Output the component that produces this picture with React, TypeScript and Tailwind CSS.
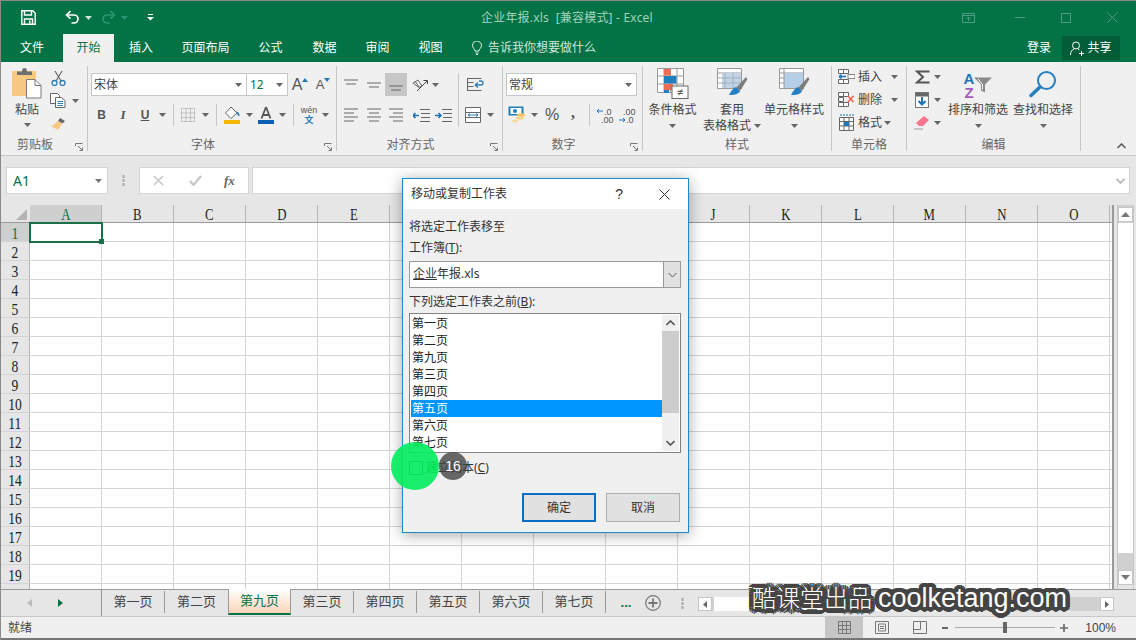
import React from "react";

const Caret = ({ c = "#666" }: { c?: string }) => (
  <svg width="7" height="4" viewBox="0 0 7 4"><path d="M0 0h7L3.5 4z" fill={c} /></svg>
);
const Launcher = () => (
  <svg width="8" height="8" viewBox="0 0 8 8" fill="none" stroke="#777"><path d="M.5 3V.5H7.5" /><path d="M3 3l4 4M7.5 4.5v3h-3" /></svg>
);
const Lines = ({ kind }: { kind: string }) => {
  const rows: Record<string, string> = {
    top: "M1 3h14M3 7h10",
    mid: "M1 6h14M3 10h10",
    bottom: "M1 9h14M3 13h10",
    left: "M1 2h14M1 6h10M1 10h14M1 14h10",
    center: "M1 2h14M3 6h10M1 10h14M3 14h10",
    right: "M1 2h14M5 6h10M1 10h14M5 14h10",
  };
  return <svg width="16" height="16" viewBox="0 0 16 16" fill="none" stroke="#666"><path d={rows[kind]} /></svg>;
};
const Sep = () => <div className="h-[22px] w-px bg-[#c6c6c6]" />;

const Save = () => (
  <svg width="15" height="15" viewBox="0 0 15 15" fill="none" stroke="#fff" strokeWidth="1.4"><path d="M.8.8h11l2.4 2.4v11H.8z" /><path d="M3.5 1v4h7V1M3.5 14V9h8v5" /><path d="M8 10.5h1.5v3H8z" fill="#fff" stroke="none" /></svg>
);
const Undo = ({ c }: { c: string }) => (
  <svg width="15" height="15" viewBox="0 0 15 15" fill="none" stroke={c} strokeWidth="1.7"><path d="M5.5 1.2 1.6 5l3.9 3.7" /><path d="M2 5h7a4 4 0 0 1 0 8H6.5" /></svg>
);
const Paste = () => (
  <svg width="30" height="32" viewBox="0 0 30 32">
    <rect x="0" y="4" width="24" height="25" rx="1" fill="#f8c981" />
    <path d="M5 8V4.500h5C10 2 11 1 12.500 1S15 2 15 4.500h5V8z" fill="#6f6f6f" />
    <path d="M14.500 12.500H23l6 6V31H14.500z" fill="#fff" stroke="#7a7a7a" />
    <path d="M23 13v5.500h6" fill="none" stroke="#7a7a7a" />
  </svg>
);
const Scissors = () => (
  <svg width="15" height="16" viewBox="0 0 15 16" fill="none"><path d="M4 1l6 10M11 1 5 11" stroke="#666" strokeWidth="1.200" /><circle cx="3.500" cy="13" r="2.500" stroke="#2e7fb8" strokeWidth="1.300" /><circle cx="11.500" cy="13" r="2.500" stroke="#2e7fb8" strokeWidth="1.300" /></svg>
);
const Copy = () => (
  <svg width="16" height="15" viewBox="0 0 16 15" fill="#fff" stroke="#666"><path d="M.5.500h7l2 2v8H.5z" /><path d="M5.500 4.500h6l3.500 3v7H5.500z" /><path d="M7.500 8.500h5.500M7.500 10.500h5.500M7.500 12.500h5.500" stroke="#2e7fb8" /></svg>
);
const Brush = () => (
  <svg width="16" height="14" viewBox="0 0 16 14"><path d="M10 1l5 3-2.500 2.500L8 4z" fill="#666" /><path d="M7.500 4 12 7 8 13 1 9 3.500 8z" fill="#f7c784" /></svg>
);
const BorderIcon = () => (
  <svg width="14" height="14" viewBox="0 0 14 14" fill="none" stroke="#999" strokeDasharray="1 1"><path d="M.5.500h13v13H.5zM.5 5h13M.5 9.500h13M5 .500v13M9.500.500v13" /></svg>
);
const Fill = () => (
  <svg width="17" height="19" viewBox="0 0 17 19"><path d="M7 1 1.500 7 7 12.500 13 7z" fill="#fff" stroke="#666" /><path d="M12 5l3 2 .5 3-1.500 0z" fill="#2e7fb8" /><rect x="0" y="14" width="16" height="4" fill="#f5b800" /></svg>
);
const FontColor = () => (
  <svg width="16" height="19" viewBox="0 0 16 19"><path d="M8 1 3.500 12.500M8 1l4.500 11.500M5 9h6" fill="none" stroke="#555" strokeWidth="1.800" /><rect x="0" y="14" width="16" height="4" fill="#0a5fb4" /></svg>
);
const Orient = () => (
  <svg width="18" height="16" viewBox="0 0 18 16" fill="none" stroke="#666"><path d="M2 6l5-3 4 6-3 1.500zM4 4l4 6" /><path d="M6 14 16 4M12.500 3.500H16.500V7" stroke="#444" /></svg>
);
const Wrap = () => (
  <svg width="17" height="16" viewBox="0 0 17 16" fill="none" stroke="#666"><path d="M.5 1.500h14M.5 5.500h6M.5 9.500h6M.5 13.500h14M.500 1v13" /><path d="M8 8h6a2 2 0 0 0 0-4h-2M8 8l3-2.500M8 8l3 2.500" stroke="#2e7fb8" strokeWidth="1.300" /></svg>
);
const Merge = () => (
  <svg width="16" height="16" viewBox="0 0 16 16" fill="#fff" stroke="#666"><path d="M.5.500h15v15H.5zM.5 5.500h15M.5 10.500h15" /><path d="M3 8h10M3 8l2-1.500M3 8l2 1.500M13 8l-2-1.500M13 8l-2 1.500" fill="none" stroke="#2e7fb8" /></svg>
);
const Indent = ({ inc }: { inc?: boolean }) => (
  <svg width="17" height="13" viewBox="0 0 17 13" fill="none" stroke="#666"><path d="M7 .500h10M8 4.500h9M8 8.500h9M7 12.500h10" /><path d={inc ? "M0 6.500h6M3.500 4l2.500 2.500L3.500 9" : "M6 6.500H0M2.500 4 0 6.500 2.500 9"} stroke="#1b75bb" strokeWidth="1.600" /></svg>
);
const Accounting = () => (
  <svg width="18" height="18" viewBox="0 0 18 18"><rect x=".5" y=".5" width="15" height="9" fill="#1f7eb8" /><rect x="2.500" y="2" width="11" height="6" fill="#fff" /><circle cx="7" cy="5" r="2" fill="#1f7eb8" /><ellipse cx="13" cy="9" rx="4" ry="1.700" fill="#f5c35a" /><ellipse cx="12" cy="12" rx="4" ry="1.700" fill="#f5d488" /><ellipse cx="7" cy="15" rx="3" ry="1.500" fill="#f7dca0" /></svg>
);
const CondFmt = () => (
  <svg width="32" height="31" viewBox="0 0 32 31">
    <path d="M.5.500h26v24H.500zM.5 8h26M.5 16h26M7 .5v24M13.500.500v24M20 .5v24" fill="#fff" stroke="#999" />
    <rect x="7" y="1" width="6.500" height="6.500" fill="#ef6c50" />
    <rect x="7" y="8" width="12.500" height="7.500" fill="#1e7fbf" />
    <rect x="7" y="16" width="9" height="6" fill="#ef6c50" />
    <rect x="7" y="22" width="5" height="3" fill="#1e7fbf" />
    <rect x="15" y="18" width="16" height="12.500" fill="#fff" stroke="#666" />
    <text x="23" y="28" fontSize="11" textAnchor="middle" fill="#444" className="[font-family:'Liberation_Sans',sans-serif]">≠</text>
  </svg>
);
const TableFmt = ({ small }: { small?: boolean }) => (
  <svg width="31" height="31" viewBox="0 0 31 31">
    <path d="M.5.500h24v20H.500z" fill="#fff" stroke="#999" />
    <path d="M.5 5h24" stroke="#999" />
    <rect x="5" y="5" width="19" height="15" fill={small ? "#b7cfe6" : "#c4d4e4"} />
    {!small && <path d="M8 5v16M16 5v16M1 10h23M1 15h23" stroke="#9fb2c4" fill="none" />}
    {small && <path d="M5 1v19M1 10h4M1 15h4" stroke="#999" fill="none" />}
    <path d="M19 20 29 9l1.500 2L23 23z" fill="#7d7d7d" />
    <path d="M19 19c-3 1-5 4-7 8 4 0 9-.5 11-3.500z" fill="#2380c2" />
  </svg>
);
const InsertCell = () => (
  <svg width="17" height="15" viewBox="0 0 17 15" fill="#fff" stroke="#666"><path d="M.5.500h5v4h-5zM5.500.500h5v4h-5zM.5 10.500h5v4h-5zM5.500 10.500h5v4h-5z" /><path d="M10 5.500h7v4h-7z" stroke="#888" /><path d="M1 7.500h7M1 7.500l2.500-2M1 7.500l2.500 2" fill="none" stroke="#1b75bb" strokeWidth="1.500" /></svg>
);
const DeleteCell = () => (
  <svg width="17" height="16" viewBox="0 0 17 16" fill="#fff" stroke="#666"><path d="M.5.500h5v4h-5zM5.500.500h5v4h-5zM.5 10.500h5v4h-5zM5.500 10.500h5v4h-5zM.500 5.500h5v4h-5z" /><path d="M10 4l5.500 6M15.500 4 10 10" fill="none" stroke="#e8604a" strokeWidth="1.500" /></svg>
);
const FormatCell = () => (
  <svg width="16" height="17" viewBox="0 0 16 17" fill="#fff" stroke="#666"><path d="M1 1h14" stroke="#1b75bb" strokeDasharray="2 1" /><path d="M.5 3.500h14v13H.5zM.5 7.500h14M.5 12h14M5 3.500v13M10 3.500v13" /><rect x="5" y="8" width="5" height="4" fill="#1b75bb" stroke="none" /></svg>
);
const Sigma = () => (
  <svg width="15" height="14" viewBox="0 0 15 14" fill="none" stroke="#555" strokeWidth="2"><path d="M14.500 1.500H2L8 7l-6 5.500h12.500" /></svg>
);
const FillDown = () => (
  <svg width="14" height="16" viewBox="0 0 14 16"><rect x=".5" y=".5" width="13" height="15" fill="#fff" stroke="#777" /><rect x="1" y="1" width="12" height="3.500" fill="#666" /><path d="M7 5v7M3.500 9 7 12.500 10.500 9" fill="none" stroke="#1b75bb" strokeWidth="2" /></svg>
);
const Eraser = () => (
  <svg width="16" height="14" viewBox="0 0 16 14"><path d="M10 0l5 4-6 6H5L2 7z" fill="#f7768e" /><path d="M0 13h9" stroke="#aaa" strokeWidth="1.200" /></svg>
);
const SortIcon = () => (
  <svg width="32" height="34" viewBox="0 0 32 34">
    <path d="M12 10.500h18l-7 7v8l-4-2v-6z" fill="#8a8a8a" />
    <path d="M16 12 20.500 17.500v5" fill="none" stroke="#fff" />
    <text x="7" y="16.500" fontSize="15" fontWeight="700" textAnchor="middle" fill="#1b75bb" className="[font-family:'Liberation_Sans',sans-serif]">A</text>
    <text x="7" y="30.500" fontSize="15" fontWeight="700" textAnchor="middle" fill="#a05cb8" className="[font-family:'Liberation_Sans',sans-serif]">Z</text>
  </svg>
);
const Magnifier = () => (
  <svg width="28" height="28" viewBox="0 0 28 28" fill="none" stroke="#2680c2"><circle cx="17.500" cy="10.500" r="8.500" strokeWidth="2" /><path d="M11 17 2 25.500" strokeWidth="3.500" strokeLinecap="round" /></svg>
);
const SmallBtn = ({ children, w }: { children: React.ReactNode; w: string }) => (
  <div className={`flex h-full items-center justify-center ${w}`}>{children}</div>
);

const GroupLabel = ({ text, launcher }: { text: string; launcher?: boolean }) => (
  <div className={`relative mt-auto -mb-[2px] flex h-[16px] items-center justify-center text-[12px] leading-none text-[#666] ${launcher ? "pr-[18px]" : ""}`}>
    {text}
    {launcher && <span className="absolute right-[4px] bottom-[2px] flex"><Launcher /></span>}
  </div>
);

const LargeBtn = ({ icon, lines, w }: { icon: React.ReactNode; lines: string[]; w: string }) => (
  <div className={`flex flex-col items-center ${w}`}>
    <div className="flex h-[35px] items-center">{icon}</div>
    <div className="mt-[1px] text-[12px] leading-[16px] whitespace-nowrap">{lines[0]}</div>
    {lines[1] ? (
      <div className="flex items-center gap-[3px] text-[12px] leading-[15px] whitespace-nowrap">{lines[1]}<Caret /></div>
    ) : (
      <div className="flex h-[15px] items-center"><Caret /></div>
    )}
  </div>
);

const Tab = ({ t, w, active }: { t: string; w: string; active?: boolean }) => (
  <div className={`flex items-center justify-center ${w} ${active ? "bg-[#f0f0f0] text-[#037345]" : "text-white"}`}>{t}</div>
);

const cols = "ABCDEFGHIJKLMNO".split("");
const rows = Array.from({ length: 20 }, (_, i) => i + 1);
const sheets = ["第一页", "第二页", "第九页", "第三页", "第四页", "第五页", "第六页", "第七页"];
const listItems = ["第一页", "第二页", "第九页", "第三页", "第四页", "第五页", "第六页", "第七页"];

export default function App() {
  return (
    <div className="relative flex h-[640px] w-[1136px] flex-col overflow-hidden border-t border-l border-[#8a8a8a] bg-[#e6e6e6] text-[12px] text-[#444] [font-family:'Noto_Sans','Noto_Sans_CJK_SC',sans-serif]">
      {/* title bar */}
      <div className="flex h-[33px] shrink-0 items-center bg-[#037345]">
        <SmallBtn w="ml-[14px] w-[26px]"><Save /></SmallBtn>
        <SmallBtn w="ml-[22px] w-[18px]"><Undo c="#fff" /></SmallBtn>
        <SmallBtn w="w-[14px]"><Caret c="#cfe6da" /></SmallBtn>
        <SmallBtn w="ml-[4px] w-[18px]"><span className="-scale-x-100"><Undo c="#2b9670" /></span></SmallBtn>
        <SmallBtn w="w-[14px]"><Caret c="#2b9670" /></SmallBtn>
        <SmallBtn w="ml-[12px] w-[14px]">
          <svg width="7" height="7" viewBox="0 0 7 7"><path d="M1 .5h5" stroke="#fff" /><path d="M0 3h7L3.500 6.500z" fill="#fff" /></svg>
        </SmallBtn>
        <div className="ml-[324px] w-[200px] text-[12px] tracking-[0.2px] whitespace-pre text-[#a2d2bc]">企业年报.xls  [兼容模式] - Excel</div>
        <div className="ml-auto flex h-full items-center">
          <svg width="13" height="10" viewBox="0 0 13 10" fill="none" stroke="#4d9e82"><path d="M.5.500h12v9H.5zM.5 2.500h12M6.500 8V4M4.500 6l2-2 2 2" /></svg>
          <svg className="ml-[40px]" width="10" height="1"><path d="M0 .5h10" stroke="#4d9e82" /></svg>
          <svg className="ml-[36px]" width="10" height="10"><path d="M.5.500h9v9h-9z" fill="none" stroke="#4d9e82" /></svg>
          <svg className="mr-[18px] ml-[36px]" width="11" height="11"><path d="M.5.500l10 10M10.500.500l-10 10" fill="none" stroke="#4d9e82" /></svg>
        </div>
      </div>
      {/* tabs */}
      <div className="flex h-[28px] shrink-0 items-stretch bg-[#037345] text-[12px]">
        <Tab t="文件" w="w-[62px]" />
        <Tab t="开始" w="w-[51px]" active />
        <Tab t="插入" w="w-[54px]" />
        <Tab t="页面布局" w="w-[75px]" />
        <Tab t="公式" w="w-[55px]" />
        <Tab t="数据" w="w-[53px]" />
        <Tab t="审阅" w="w-[53px]" />
        <Tab t="视图" w="w-[53px]" />
        <div className="ml-[15px] flex items-center gap-[6px] text-[#cfe6da]">
          <svg width="10" height="14" viewBox="0 0 10 14" fill="none" stroke="#e6f2ec"><path d="M3 10c0-2-2.500-3-2.500-5.500a4.500 4.500 0 0 1 9 0C9.500 7 7 8 7 10zM3.500 12h3M4 13.500h2" /></svg>
          告诉我你想要做什么
        </div>
        <div className="ml-auto flex items-center">
          <span className="text-white">登录</span>
          <div className="mr-[16px] ml-[11px] flex h-[24px] w-[58px] items-center justify-center gap-[3px] bg-[#025c37] text-white">
            <svg width="14" height="15" viewBox="0 0 14 15" fill="none" stroke="#fff"><circle cx="6" cy="4.500" r="3.500" /><path d="M.5 14c0-3.500 1.500-5 3.500-6M8 8l1.500 1M9 12.500h5M11.500 10v5" /></svg>
            共享
          </div>
        </div>
      </div>
      {/* ribbon */}
      <div className="flex h-[94px] shrink-0 items-stretch border-b border-[#c6c6c6] bg-[#f0f0f0] text-[#444]">
        {/* clipboard */}
        <div className="my-[4px] flex w-[87px] flex-col border-r border-[#c6c6c6]">
          <div className="flex">
            <div className="ml-[11px] flex w-[30px] flex-col items-center">
              <div className="flex h-[33px] items-end"><Paste /></div>
              <div className="mt-[3px] text-[12px] leading-[16px] whitespace-nowrap">粘贴</div>
              <div className="mt-[3px] flex h-[8px] items-center"><Caret /></div>
            </div>
            <div className="ml-[8px] flex flex-col">
              <div className="flex h-[23px] w-[16px] items-center justify-center"><Scissors /></div>
              <div className="flex h-[23px] items-center"><div className="flex w-[16px] justify-center"><Copy /></div><span className="ml-[6px]"><Caret /></span></div>
              <div className="flex h-[23px] w-[16px] items-center justify-center"><Brush /></div>
            </div>
          </div>
          <GroupLabel text="剪贴板" launcher />
        </div>
        {/* font */}
        <div className="my-[4px] flex w-[249px] flex-col border-r border-[#c6c6c6]">
          <div className="mt-[7px] ml-[3px] flex h-[23px] items-stretch">
            <div className="flex w-[156px] items-center justify-between border border-[#c6c6c6] bg-white pr-[4px] pl-[2px] text-[12px]">宋体<Caret /></div>
            <div className="flex w-[41px] items-center justify-between border border-l-0 border-[#c6c6c6] bg-white pr-[4px] pl-[3px] text-[12px] text-[#037345]">12<Caret /></div>
            <div className="ml-[2px] flex w-[20px] items-center justify-center">
              <span className="text-[16px] text-[#555] [font-family:'Liberation_Sans',sans-serif]">A</span>
              <svg className="-mt-[10px]" width="6" height="4"><path d="M0 4h6L3 0z" fill="#1f7eb8" /></svg>
            </div>
            <div className="ml-[2px] flex w-[22px] items-center justify-center">
              <span className="text-[13px] text-[#555] [font-family:'Liberation_Sans',sans-serif]">A</span>
              <svg className="-mt-[10px]" width="6" height="4"><path d="M0 0h6L3 4z" fill="#1f7eb8" /></svg>
            </div>
          </div>
          <div className="mt-[8px] ml-[3px] flex h-[22px] items-center">
            <SmallBtn w="w-[21px]"><span className="text-[12px] font-bold text-[#555] [font-family:'Liberation_Sans',sans-serif]">B</span></SmallBtn>
            <SmallBtn w="w-[22px]"><span className="text-[13px] font-bold text-[#555] italic [font-family:'Liberation_Serif',serif]">I</span></SmallBtn>
            <SmallBtn w="w-[22px]"><span className="text-[12px] font-bold text-[#555] underline [font-family:'Liberation_Sans',sans-serif]">U</span></SmallBtn>
            <SmallBtn w="w-[12px]"><Caret /></SmallBtn>
            <SmallBtn w="w-[10px]"><Sep /></SmallBtn>
            <SmallBtn w="w-[20px]"><BorderIcon /></SmallBtn>
            <SmallBtn w="w-[14px]"><Caret /></SmallBtn>
            <SmallBtn w="w-[8px]"><Sep /></SmallBtn>
            <SmallBtn w="w-[24px]"><Fill /></SmallBtn>
            <SmallBtn w="w-[10px]"><Caret /></SmallBtn>
            <SmallBtn w="w-[24px]"><FontColor /></SmallBtn>
            <SmallBtn w="w-[8px]"><Caret /></SmallBtn>
            <SmallBtn w="w-[14px]"><Sep /></SmallBtn>
            <div className="flex w-[18px] flex-col items-center text-[9px] leading-[10px] whitespace-nowrap text-[#555]">
              <span className="[font-family:'Liberation_Sans',sans-serif]">wén</span>
              <span className="font-bold text-[#1f7eb8]">文</span>
            </div>
            <SmallBtn w="w-[14px]"><Caret /></SmallBtn>
          </div>
          <GroupLabel text="字体" launcher />
        </div>
        {/* align */}
        <div className="my-[4px] flex w-[166px] flex-col border-r border-[#c6c6c6]">
          <div className="mt-[7px] ml-[3px] flex h-[23px] items-center">
            <SmallBtn w="w-[22px]"><Lines kind="top" /></SmallBtn>
            <SmallBtn w="ml-[1px] w-[22px]"><Lines kind="mid" /></SmallBtn>
            <SmallBtn w="w-[22px] bg-[#c6c6c6]"><Lines kind="bottom" /></SmallBtn>
            <SmallBtn w="ml-[2px] w-[22px]"><Orient /></SmallBtn>
            <SmallBtn w="w-[8px]"><Caret /></SmallBtn>
            <SmallBtn w="ml-[15px] w-[9px]"><div className="h-[54px] w-px self-start bg-[#c6c6c6]" /></SmallBtn>
            <SmallBtn w="w-[24px]"><Wrap /></SmallBtn>
          </div>
          <div className="mt-[8px] ml-[3px] flex h-[22px] items-center">
            <SmallBtn w="w-[22px]"><Lines kind="left" /></SmallBtn>
            <SmallBtn w="ml-[1px] w-[22px]"><Lines kind="center" /></SmallBtn>
            <SmallBtn w="w-[22px]"><Lines kind="right" /></SmallBtn>
            <SmallBtn w="ml-[3px] w-[22px]"><Indent /></SmallBtn>
            <SmallBtn w="w-[22px]"><Indent inc /></SmallBtn>
            <SmallBtn w="ml-[8px] w-[22px]"><Merge /></SmallBtn>
            <SmallBtn w="w-[12px]"><Caret /></SmallBtn>
          </div>
          <GroupLabel text="对齐方式" launcher />
        </div>
        {/* number */}
        <div className="my-[4px] flex w-[140px] flex-col border-r border-[#c6c6c6]">
          <div className="mt-[7px] ml-[3px] flex h-[23px] w-[131px] items-center justify-between border border-[#c6c6c6] bg-white pr-[4px] pl-[2px]">常规<Caret /></div>
          <div className="mt-[8px] ml-[4px] flex h-[22px] items-center">
            <SmallBtn w="w-[20px]"><Accounting /></SmallBtn>
            <SmallBtn w="w-[14px]"><Caret /></SmallBtn>
            <SmallBtn w="w-[22px]"><span className="text-[16px] text-[#555] [font-family:'Liberation_Sans',sans-serif]">%</span></SmallBtn>
            <SmallBtn w="w-[20px]"><span className="-mt-[4px] text-[16px] font-bold text-[#555] [font-family:'Liberation_Serif',serif]">,</span></SmallBtn>
            <SmallBtn w="w-[12px]"><Sep /></SmallBtn>
            <SmallBtn w="w-[20px]">
              <svg width="18" height="17" viewBox="0 0 18 17" fill="none"><path d="M7 4H1M3 2 1 4l2 2" stroke="#1b75bb" /><text x="8" y="8" fontSize="9" fill="#555" className="[font-family:'Liberation_Sans',sans-serif]">.0</text><text x="5" y="16" fontSize="9" fill="#555" className="[font-family:'Liberation_Sans',sans-serif]">.00</text></svg>
            </SmallBtn>
            <SmallBtn w="ml-[2px] w-[20px]">
              <svg width="18" height="17" viewBox="0 0 18 17" fill="none"><path d="M1 13h6M5 11l2 2-2 2" stroke="#1b75bb" /><text x="5" y="8" fontSize="9" fill="#555" className="[font-family:'Liberation_Sans',sans-serif]">.00</text><text x="8" y="16" fontSize="9" fill="#555" className="[font-family:'Liberation_Sans',sans-serif]">.0</text></svg>
            </SmallBtn>
          </div>
          <GroupLabel text="数字" launcher />
        </div>
        {/* styles */}
        <div className="my-[4px] flex w-[189px] flex-col border-r border-[#c6c6c6]">
          <div className="flex">
            <LargeBtn w="w-[59px]" icon={<CondFmt />} lines={["条件格式"]} />
            <LargeBtn w="w-[60px]" icon={<TableFmt />} lines={["套用", "表格格式"]} />
            <div className="w-[2px]" />
            <LargeBtn w="w-[60px]" icon={<TableFmt small />} lines={["单元格样式"]} />
          </div>
          <GroupLabel text="样式" />
        </div>
        {/* cells */}
        <div className="my-[4px] flex w-[75px] flex-col border-r border-[#c6c6c6]">
          <div className="-mt-px ml-[6px] flex flex-col">
            {[
              { i: <InsertCell />, t: "插入", m: "ml-[9px]" },
              { i: <DeleteCell />, t: "删除", m: "ml-[9px]" },
              { i: <FormatCell />, t: "格式", m: "ml-[2px]" },
            ].map((r) => (
              <div key={r.t} className="flex h-[23px] items-center">
                <div className="flex w-[17px] justify-center">{r.i}</div>
                <span className="ml-[3px] whitespace-nowrap">{r.t}</span>
                <span className={`flex ${r.m}`}><Caret /></span>
              </div>
            ))}
          </div>
          <GroupLabel text="单元格" />
        </div>
        {/* edit */}
        <div className="my-[4px] flex w-[174px] flex-col border-r border-[#c6c6c6]">
          <div className="flex">
            <div className="-mt-px ml-[7px] flex w-[34px] flex-col">
              <div className="flex h-[23px] items-center"><div className="flex w-[16px] justify-center"><Sigma /></div><span className="ml-[4px]"><Caret /></span></div>
              <div className="flex h-[23px] items-center"><div className="flex w-[16px] justify-center"><FillDown /></div><span className="ml-[4px]"><Caret /></span></div>
              <div className="flex h-[23px] items-center"><div className="flex w-[16px] justify-center"><Eraser /></div><span className="ml-[4px]"><Caret /></span></div>
            </div>
            <LargeBtn w="w-[60px]" icon={<SortIcon />} lines={["排序和筛选"]} />
            <div className="w-[5px]" />
            <LargeBtn w="w-[60px]" icon={<Magnifier />} lines={["查找和选择"]} />
          </div>
          <GroupLabel text="编辑" />
        </div>
        <div className="flex flex-1 items-end justify-end pr-[10px] pb-[6px]">
          <svg width="9" height="6" viewBox="0 0 9 6" fill="none" stroke="#555" strokeWidth="1.500"><path d="M.5 5 4.500 1l4 4" /></svg>
        </div>
      </div>
      {/* formula bar */}
      <div className="flex h-[49px] shrink-0 items-start bg-[#e6e6e6] pt-[11px]">
        <div className="ml-[5px] flex h-[27px] w-[102px] items-center justify-between border border-[#d4d4d4] bg-white pr-[5px] pl-[6px] text-[14px] text-[#037345]">
          A1<Caret c="#777" />
        </div>
        <div className="flex h-[27px] w-[31px] items-center justify-center">
          <svg width="3" height="11"><path d="M1.500 0v3M1.500 4v3M1.500 8v3" stroke="#aaa" strokeWidth="2" /></svg>
        </div>
        <div className="flex h-[27px] w-[110px] items-center border border-[#d4d4d4] bg-white">
          <svg className="ml-[13px]" width="11" height="11" fill="none" stroke="#c6c6c6" strokeWidth="1.500"><path d="M1 1l9 9M10 1l-9 9" /></svg>
          <svg className="ml-[25px]" width="13" height="11" fill="none" stroke="#c6c6c6" strokeWidth="2.200"><path d="M1 6l3.500 4L12 1" /></svg>
          <span className="ml-[22px] text-[13px] font-bold text-[#666] italic [font-family:'Liberation_Serif',serif]">fx</span>
        </div>
        <div className="ml-[3px] flex h-[27px] w-[878px] items-center justify-end border border-[#d4d4d4] bg-white pr-[4px]">
          <svg width="9" height="6" fill="none" stroke="#bbb" strokeWidth="1.800"><path d="M.5 1l4 4 4-4" /></svg>
        </div>
      </div>
      {/* grid */}
      <div className="flex h-[384px] shrink-0">
        <div className="relative h-full w-[1113px] overflow-hidden border-r-2 border-[#9a9a9a] bg-white [font-family:'Liberation_Serif',serif]">
          <div className="flex h-[18px] border-b border-[#9a9a9a] bg-[#e6e6e6]">
            <div className="flex w-[29px] items-end justify-end pr-[3px] pb-[2px]">
              <svg width="11" height="11"><path d="M11 0v11H0z" fill="#b4b4b4" /></svg>
            </div>
            {cols.map((c) => (
              <div key={c} className={`flex w-[72px] items-center justify-center border-r border-[#b4b4b4] pt-[3px] leading-none ${c === "A" ? "bg-[#cfcfcf] text-[#037345]" : "text-[#222]"}`}>
                <span className="scale-x-[0.8] text-[16px]">{c}</span>
              </div>
            ))}
          </div>
          {rows.map((r) => (
            <div key={r} className="flex h-[19px] border-b border-[#d4d4d4]">
              <div className={`flex w-[29px] items-center justify-center border-r border-[#b4b4b4] pt-[3px] leading-none ${r === 1 ? "bg-[#cfcfcf] text-[#037345]" : "bg-[#e6e6e6] text-[#222]"}`}>
                <span className="scale-x-[0.85] text-[16px]">{r === 20 ? "" : r}</span>
              </div>
              {cols.map((c) => (
                <div key={c} className="w-[72px] border-r border-[#d4d4d4]" />
              ))}
            </div>
          ))}
          <div className="absolute top-[17px] left-[28px] h-[21px] w-[74px] border-2 border-[#1a6e48]">
            <div className="absolute -right-[3px] -bottom-[3px] h-[5px] w-[5px] bg-[#1a6e48]" />
          </div>
        </div>
        <div className="ml-[3px] flex w-[17px] flex-col border-x border-[#c6c6c6] bg-[#d0d0d0]">
          <div className="mt-[2px] flex h-[15px] items-center justify-center border border-[#c6c6c6] bg-white">
            <svg width="9" height="5"><path d="M0 5h9L4.500 0z" fill="#777" /></svg>
          </div>
          <div className="mt-px h-[330px] bg-white" />
          <div className="mt-auto flex h-[15px] items-center justify-center border border-[#c6c6c6] bg-white">
            <svg width="9" height="5"><path d="M0 0h9L4.500 5z" fill="#777" /></svg>
          </div>
          <div className="h-[4px] bg-[#e6e6e6]" />
        </div>
      </div>
      {/* sheet tabs */}
      <div className="flex h-[28px] shrink-0 items-start border-t border-b border-t-[#9a9a9a] border-b-[#c6c6c6] bg-[#e6e6e6] text-[13px]">
        <div className="flex h-[26px] w-[101px] items-center border-r border-[#9a9a9a]">
          <svg className="ml-[26px]" width="5" height="8"><path d="M5 0v8L0 4z" fill="#bbb" /></svg>
          <svg className="ml-[26px]" width="5" height="8"><path d="M0 0v8l5-4z" fill="#037345" /></svg>
        </div>
        {sheets.map((s, i) =>
          i === 2 ? (
            <div key={s} className="-mt-px flex h-[26px] w-[63px] items-center justify-center border-x border-b-2 border-x-[#9a9a9a] border-b-[#037345] bg-gradient-to-b from-white to-[#fbd4b8] text-[#037345]">{s}</div>
          ) : (
            <div key={s} className={`mt-[1px] flex h-[22px] w-[63px] items-center justify-center ${i === 1 ? "" : "border-r border-[#9a9a9a]"}`}>{s}</div>
          )
        )}
        <div className="ml-[13px] flex h-[26px] w-[14px] items-center justify-center text-[13px] font-bold text-[#037345]">...</div>
        <div className="ml-[12px] flex h-[26px] items-center">
          <svg width="16" height="16" viewBox="0 0 16 16" fill="none" stroke="#777" strokeWidth="1.200"><circle cx="8" cy="8" r="7.300" /><path d="M8 3.500v9M3.500 8h9" strokeWidth="1.800" /></svg>
        </div>
        <div className="ml-[20px] flex h-[26px] items-center">
          <svg width="3" height="11"><path d="M1.500 0v3M1.500 4v3M1.500 8v3" stroke="#aaa" strokeWidth="2" /></svg>
        </div>
        <div className="mt-[7px] ml-[14px] flex h-[14px] w-[416px] bg-[#d0d0d0]">
          <div className="flex w-[14px] items-center justify-center border border-[#c6c6c6] bg-white">
            <svg width="4" height="7"><path d="M4 0v7L0 3.500z" fill="#666" /></svg>
          </div>
          <div className="ml-[2px] w-[260px] bg-white" />
          <div className="ml-auto flex w-[14px] items-center justify-center border border-[#c6c6c6] bg-white">
            <svg width="4" height="7"><path d="M0 0v7l4-3.500z" fill="#666" /></svg>
          </div>
        </div>
      </div>
      {/* status */}
      <div className="flex h-[21px] shrink-0 items-stretch bg-[#f0f0f0] text-[12px]">
        <div className="ml-[7px] flex items-center">就绪</div>
        <div className="ml-auto flex items-stretch">
          <div className="flex w-[38px] items-center justify-center bg-[#c6c6c6]">
            <svg width="13" height="13" fill="none" stroke="#777"><path d="M.5.500h12v12H.5zM4.500.500v12M8.500.500v12M.5 4.500h12M.5 8.500h12" /></svg>
          </div>
          <div className="flex w-[38px] items-center justify-center">
            <svg width="14" height="13" fill="none" stroke="#777"><path d="M.5.500h13v12H.5zM3.500 3v7h7V3zM5 5.500h4M5 7.500h4" /></svg>
          </div>
          <div className="flex w-[38px] items-center justify-center">
            <svg width="14" height="13" fill="none" stroke="#777"><path d="M.5.500h13v12H.5zM.5 8.500h7V.5" /></svg>
          </div>
          <div className="ml-[3px] flex items-center">
            <svg width="6" height="2"><path d="M0 1h6" stroke="#666" strokeWidth="2" /></svg>
            <div className="relative ml-[7px] h-px w-[100px] bg-[#aaa]">
              <div className="absolute -top-[5px] left-[48px] h-[11px] w-[4px] bg-[#666]" />
            </div>
            <svg className="ml-[5px]" width="8" height="8"><path d="M0 4h8M4 0v8" stroke="#666" strokeWidth="1.600" /></svg>
          </div>
          <div className="mr-[20px] ml-[17px] flex items-center text-[12px] [font-family:'Liberation_Sans',sans-serif]">100%</div>
        </div>
      </div>
      <div className="h-[2px] shrink-0 bg-[#777]" />

      {/* dialog */}
      <div className="absolute top-[177px] left-[401px] flex h-[355px] w-[287px] flex-col border border-[#1d8ac7] bg-[#f0f0f0] text-[12px] text-[#333] shadow-[0_2px_14px_rgba(0,0,0,0.35)]">
        <div className="flex h-[30px] shrink-0 items-center bg-white pl-[8px]">
          移动或复制工作表
          <span className="ml-auto text-[14px] [font-family:'Liberation_Sans',sans-serif]">?</span>
          <svg className="mr-[18px] ml-[36px]" width="11" height="11" fill="none" stroke="#333"><path d="M.5.500l10 10M10.500.500l-10 10" /></svg>
        </div>
        <div className="mt-[9px] ml-[6px] leading-[18px]">将选定工作表移至</div>
        <div className="mt-[3px] ml-[6px] leading-[18px]">工作簿(<u>T</u>):</div>
        <div className="mt-[4px] ml-[6px] flex h-[27px] w-[272px] items-center justify-between border border-[#999] bg-white pl-[3px] text-[12px]">
          <span className="-mt-[1px]"><u>企业</u>年报.xls</span>
          <div className="flex h-full w-[17px] items-center justify-center border-l border-[#999] bg-[#e1e1e1]">
            <svg width="9" height="6" fill="none" stroke="#555"><path d="M.5 1l4 4 4-4" /></svg>
          </div>
        </div>
        <div className="mt-[5px] ml-[6px] leading-[18px]">下列选定工作表之前(<u>B</u>):</div>
        <div className="mt-[2px] ml-[6px] flex h-[140px] w-[272px] border border-[#828282] bg-white p-px">
          <div className="flex-1">
            {listItems.map((s, i) => (
              <div key={i} className={`flex h-[17px] items-center pl-[1px] ${i === 5 ? "bg-[#0096ff] text-white" : "text-[#222]"}`}>{s}</div>
            ))}
          </div>
          <div className="flex w-[17px] flex-col items-center bg-[#f0f0f0]">
            <div className="flex h-[16px] items-center"><svg width="9" height="6" fill="none" stroke="#555" strokeWidth="1.600"><path d="M.5 5l4-4 4 4" /></svg></div>
            <div className="h-[82px] w-full bg-[#cdcdcd]" />
            <div className="mt-auto flex h-[16px] items-center"><svg width="9" height="6" fill="none" stroke="#555" strokeWidth="1.600"><path d="M.5 1l4 4 4-4" /></svg></div>
          </div>
        </div>
        <div className="mt-[7px] ml-[6px] flex items-center leading-[16px]">
          <div className="h-[14px] w-[14px] border border-[#333]" />
          <span className="ml-[3px]">建立副本(<u>C</u>)</span>
        </div>
        <div className="mt-[17px] mr-[8px] flex justify-end gap-[10px]">
          <div className="flex h-[29px] w-[74px] items-center justify-center border-2 border-[#0a6fc2] bg-[#e1e1e1]">确定</div>
          <div className="flex h-[29px] w-[74px] items-center justify-center border border-[#adadad] bg-[#e1e1e1]">取消</div>
        </div>
      </div>

      {/* tutorial markers */}
      <div className="absolute top-[441px] left-[390px] h-[48px] w-[48px] rounded-full bg-[#00ee5c]/90" />
      <div className="absolute top-[451px] left-[438px] flex h-[28px] w-[28px] items-center justify-center rounded-full bg-[#444]/80 text-[14px] text-white [font-family:'Liberation_Sans',sans-serif]">16</div>

      {/* watermark */}
      <div className="absolute top-[580px] left-[751px] flex items-center whitespace-nowrap text-white [text-shadow:4.5px_0_#444,-4.5px_0_#444,0_4.5px_#444,0_-4.5px_#444,3.2px_3.2px_#444,-3.2px_3.2px_#444,3.2px_-3.2px_#444,-3.2px_-3.2px_#444,4.2px_1.7px_#444,-4.2px_1.7px_#444,4.2px_-1.7px_#444,-4.2px_-1.7px_#444,1.7px_4.2px_#444,-1.7px_4.2px_#444,1.7px_-4.2px_#444,-1.7px_-4.2px_#444,2px_0_#444,-2px_0_#444,0_2px_#444,0_-2px_#444]">
        <span className="text-[24px] leading-[34px] font-light">酷课堂出品</span>
        <span className="ml-[6px] text-[27px] leading-[34px] [font-family:'Liberation_Sans',sans-serif]">coolketang.com</span>
      </div>
    </div>
  );
}
